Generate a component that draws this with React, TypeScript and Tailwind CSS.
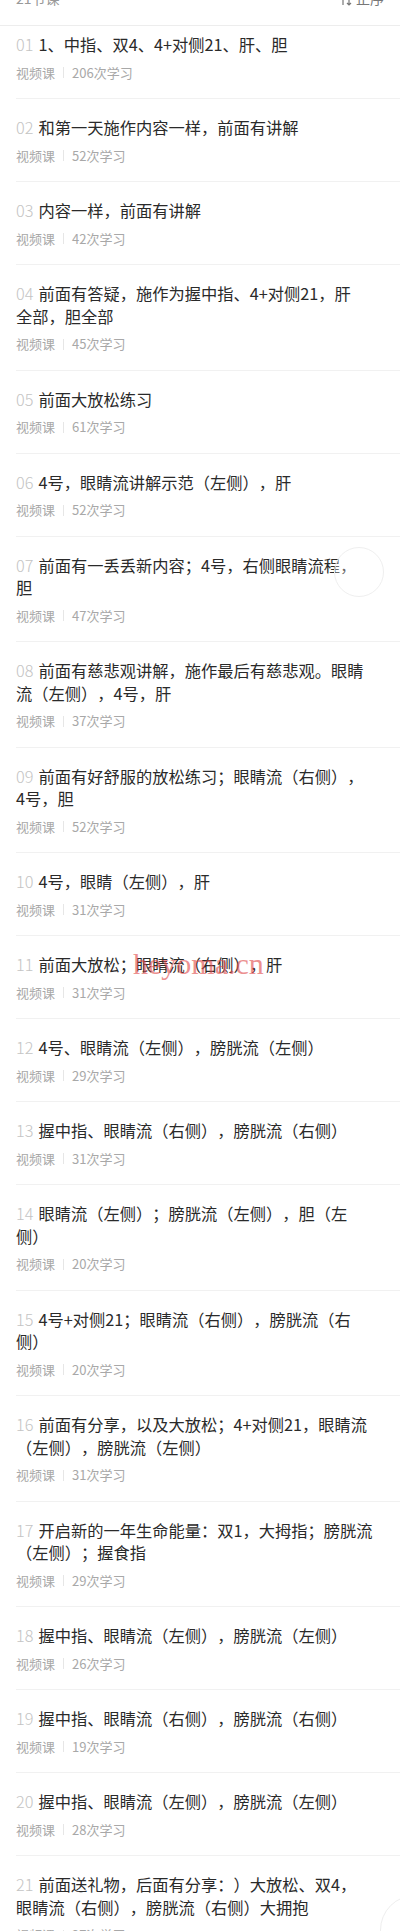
import React from "react";

type Lesson = { n: string; lines: string[]; count: number };

const lessons: Lesson[] = [
  { n: "01", lines: ["1、中指、双4、4+对侧21、肝、胆"], count: 206 },
  { n: "02", lines: ["和第一天施作内容一样，前面有讲解"], count: 52 },
  { n: "03", lines: ["内容一样，前面有讲解"], count: 42 },
  { n: "04", lines: ["前面有答疑，施作为握中指、4+对侧21，肝", "全部，胆全部"], count: 45 },
  { n: "05", lines: ["前面大放松练习"], count: 61 },
  { n: "06", lines: ["4号，眼睛流讲解示范（左侧），肝"], count: 52 },
  { n: "07", lines: ["前面有一丢丢新内容；4号，右侧眼睛流程，", "胆"], count: 47 },
  { n: "08", lines: ["前面有慈悲观讲解，施作最后有慈悲观。眼睛", "流（左侧），4号，肝"], count: 37 },
  { n: "09", lines: ["前面有好舒服的放松练习；眼睛流（右侧），", "4号，胆"], count: 52 },
  { n: "10", lines: ["4号，眼睛（左侧），肝"], count: 31 },
  { n: "11", lines: ["前面大放松；眼睛流（右侧），肝"], count: 31 },
  { n: "12", lines: ["4号、眼睛流（左侧），膀胱流（左侧）"], count: 29 },
  { n: "13", lines: ["握中指、眼睛流（右侧），膀胱流（右侧）"], count: 31 },
  { n: "14", lines: ["眼睛流（左侧）；膀胱流（左侧），胆（左", "侧）"], count: 20 },
  { n: "15", lines: ["4号+对侧21；眼睛流（右侧），膀胱流（右", "侧）"], count: 20 },
  { n: "16", lines: ["前面有分享，以及大放松；4+对侧21，眼睛流", "（左侧），膀胱流（左侧）"], count: 31 },
  { n: "17", lines: ["开启新的一年生命能量：双1，大拇指；膀胱流", "（左侧）；握食指"], count: 29 },
  { n: "18", lines: ["握中指、眼睛流（左侧），膀胱流（左侧）"], count: 26 },
  { n: "19", lines: ["握中指、眼睛流（右侧），膀胱流（右侧）"], count: 19 },
  { n: "20", lines: ["握中指、眼睛流（左侧），膀胱流（左侧）"], count: 28 },
  { n: "21", lines: ["前面送礼物，后面有分享：）大放松、双4，", "眼睛流（右侧），膀胱流（右侧）大拥抱"], count: 27 },
];

function Item({ lesson, first }: { lesson: Lesson; first: boolean }) {
  return (
    <div
      className={
        first
          ? "ml-4 pr-4 pt-[7px] pb-[16.5px]"
          : "ml-4 pr-4 pt-[17px] pb-[16.5px] border-t border-[#f1f1f1]"
      }
    >
      <div className="text-[16.25px] leading-[22.5px] text-[#2a2a2a] whitespace-nowrap [text-spacing-trim:space-all]">
        <span className="text-[#c4c4c4] font-light mr-[5px]">{lesson.n}</span>
        {lesson.lines.map((l, i) => (
          <React.Fragment key={i}>
            {i > 0 && <br />}
            {l}
          </React.Fragment>
        ))}
      </div>
      <div className="mt-2 flex items-center text-[13px] leading-[18px] text-[#a8a8a8]">
        <span>视频课</span>
        <span className="mx-2 w-px h-[11px] bg-[#e6e6e6]" />
        <span>{lesson.count}次学习</span>
      </div>
    </div>
  );
}

export default function App() {
  return (
    <div
      className="relative w-[400px] h-[1931px] overflow-hidden bg-white [text-spacing-trim:space-all]"
      style={{ fontFamily: '"Noto Sans CJK SC", "Noto Sans", sans-serif' }}
    >
      <div className="-mt-[28px] h-[54px] flex items-center justify-between px-4 border-b border-[#ededed]">
        <span className="text-[14px] text-[#999999]">21节课</span>
        <span className="flex items-center gap-1 text-[14px] text-[#777777]">
          <svg width="12" height="14" viewBox="0 0 12 14" fill="none" stroke="#777" strokeWidth="1.2">
            <path d="M3 1v12M1 3l2-2 2 2M9 13V1M7 11l2 2 2-2" />
          </svg>
          正序
        </span>
      </div>
      {lessons.map((l, i) => (
        <Item key={l.n} lesson={l} first={i === 0} />
      ))}

      <div
        className="absolute left-[133px] top-[949px] text-[30px] leading-[30px] text-[#e04848] opacity-60 pointer-events-none"
        style={{ fontFamily: '"Liberation Serif", serif' }}
      >
        heyoma.cn
      </div>

      <div className="absolute left-[334px] top-[547px] w-[50px] h-[50px] rounded-full border border-[#efefef] bg-white/30" />
      <div className="absolute left-[380px] top-[1895px] w-[70px] h-[70px] rounded-full border border-[#eeeeee] bg-white" />
    </div>
  );
}
